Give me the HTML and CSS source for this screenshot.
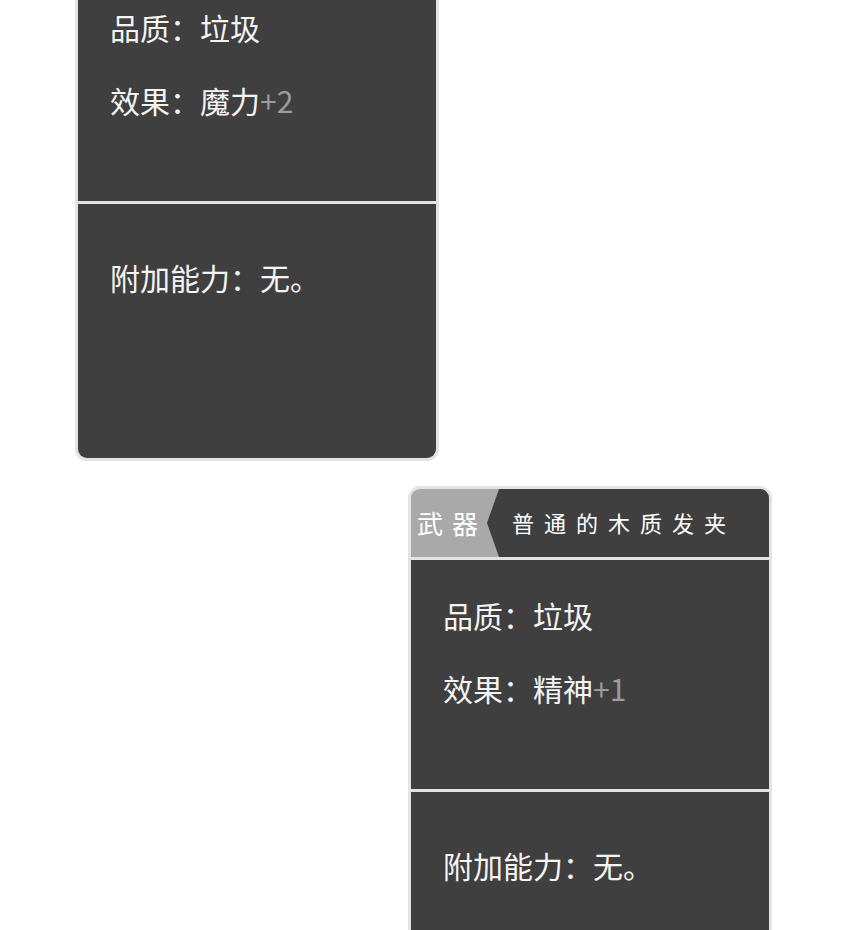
FILE: index.html
```html
<!DOCTYPE html>
<html lang="zh-CN">
  <head>
    <meta charset="utf-8">
    <title>装备</title>
    <link rel="stylesheet" href="styles.css">
  </head>
  <body>
    <div class="strip">
      <div class="card card-left">
        <div class="card-head">
          <div class="tag">武器</div>
          <div class="name">普通的木质头冠</div>
        </div>
        <div class="sect sect-stats">
          <p class="line">品质：垃圾</p>
          <p class="line">效果：魔力<span class="bonus">+2</span></p>
        </div>
        <div class="sect sect-extra">
          <p class="line">附加能力：无。</p>
        </div>
      </div>

      <div class="card card-right">
        <div class="card-head">
          <div class="tag">武器</div>
          <div class="name">普通的木质发夹</div>
        </div>
        <div class="sect sect-stats">
          <p class="line">品质：垃圾</p>
          <p class="line">效果：精神<span class="bonus">+1</span></p>
        </div>
        <div class="sect sect-extra">
          <p class="line">附加能力：无。</p>
        </div>
      </div>
    </div>
  </body>
</html>
```

FILE: styles.css
```css
body { padding: 0; margin: 0; background: #fff; overflow: hidden }

.strip {
  display: flex;
  flex-direction: column;
  gap: 25px;
  margin-top: -102px;
  font-family: "Noto Sans CJK JP", "Noto Sans CJK SC", "Noto Sans", sans-serif;
}

.card {
  display: flex;
  flex-direction: column;
  gap: 3px;
  width: 358px;
  border: 3px solid #e3e3e3;
  border-radius: 12px;
  background: #e3e3e3;
  overflow: hidden;
}

.card-left { margin-left: 75px }
.card-right { margin-left: 408px }

.card-head {
  display: flex;
  height: 68px;
  background: #a9a9a9;
}

.tag {
  flex: 0 0 74px;
  box-sizing: border-box;
  padding-left: 6px;
  color: #fff;
  font-size: 26px;
  letter-spacing: 9px;
  line-height: 68px;
  white-space: nowrap;
}

.name {
  flex: 1;
  padding-left: 25px;
  background: #3f3f3f;
  clip-path: polygon(12px 0, 100% 0, 100% 100%, 12px 100%, 0 50%);
  color: #fff;
  font-size: 22px;
  letter-spacing: 10px;
  line-height: 66px;
  white-space: nowrap;
}

.sect {
  display: flex;
  flex-direction: column;
  gap: 29px;
  padding: 33px 32px 0;
  background: #3f3f3f;
}

.sect-stats { height: 196px }
.sect-extra { height: 203px; padding-top: 51px }

.line {
  margin: 0;
  color: #f4f4f4;
  font-size: 30px;
  line-height: 44px;
}

.bonus { color: #9c9c9c }
```
